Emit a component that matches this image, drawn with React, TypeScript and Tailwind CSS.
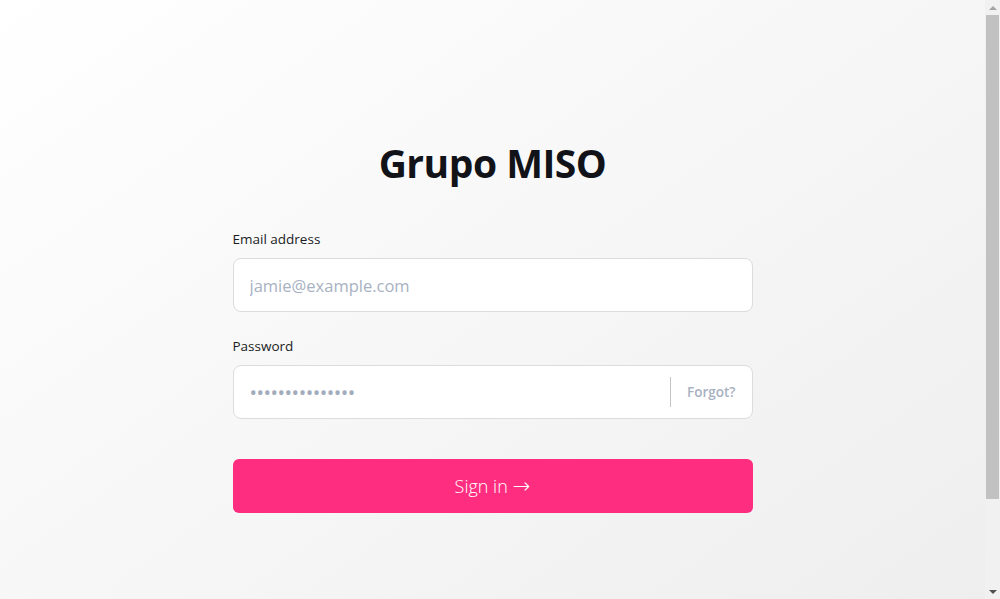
import React from 'react';

export default function App() {
  return (
    <div
      className="flex h-screen w-full overflow-hidden"
      style={{ fontFamily: '"Open Sans", "Noto Sans", sans-serif' }}
    >
      <div className="h-full flex-1 overflow-hidden">
        <div className="min-h-[704px] w-full bg-gradient-to-br from-white to-[#ededed]">
          <div className="mx-auto w-[520px] pt-[138px]">
            <h1 className="text-center text-[39px] font-bold leading-[50px] tracking-[-0.5px] text-[#111318]">
              Grupo MISO
            </h1>

            <form className="mt-[41px]" onSubmit={(e) => e.preventDefault()}>
              <label className="block text-[13.5px] font-medium leading-5 text-[#1a1d24]">
                Email address
              </label>
              <input
                type="email"
                placeholder="jamie@example.com"
                className="mt-[9px] block h-[54px] w-full rounded-lg border border-[#dcdcdc] bg-white px-4 text-[16.5px] text-[#1a1d24] placeholder-[#a8b1c2] outline-none"
              />

              <label className="mt-[24px] block text-[13.5px] font-medium leading-5 text-[#1a1d24]">
                Password
              </label>
              <div className="mt-[9px] flex h-[54px] w-full items-center rounded-lg border border-[#dcdcdc] bg-white">
                <input
                  type="password"
                  placeholder="•••••••••••••••"
                  className="h-full flex-1 rounded-l-lg bg-transparent px-4 text-[20px] tracking-[-0.5px] text-[#1a1d24] placeholder-[#a3acbd] outline-none"
                />
                <div className="h-[30px] w-px bg-[#c4c4c4]" />
                <button
                  type="button"
                  className="px-4 text-[13.5px] font-semibold text-[#a8b1c2]"
                >
                  Forgot?
                </button>
              </div>

              <button
                type="submit"
                className="mt-[40px] flex h-[54px] w-full items-center justify-center gap-[5px] rounded-md bg-[#ff2d7f] text-[18px] font-light text-white"
              >
                Sign in
                <span style={{ fontFamily: '"DejaVu Sans", sans-serif' }} className="text-[21px] font-light leading-none">
                  →
                </span>
              </button>
            </form>
          </div>
        </div>
      </div>

      {/* page scrollbar as seen in the screenshot */}
      <div className="flex h-full w-[15px] flex-col items-center bg-[#f1f1f1]">
        <div className="flex h-[15px] w-full items-center justify-center">
          <div className="h-0 w-0 border-x-[4px] border-b-[4px] border-x-transparent border-b-[#a3a3a3]" />
        </div>
        <div className="h-[484px] w-[13px] bg-[#c1c1c1]" />
        <div className="flex-1" />
        <div className="flex h-[15px] w-full items-center justify-center">
          <div className="h-0 w-0 border-x-[4px] border-t-[4px] border-x-transparent border-t-[#505050]" />
        </div>
      </div>
    </div>
  );
}
